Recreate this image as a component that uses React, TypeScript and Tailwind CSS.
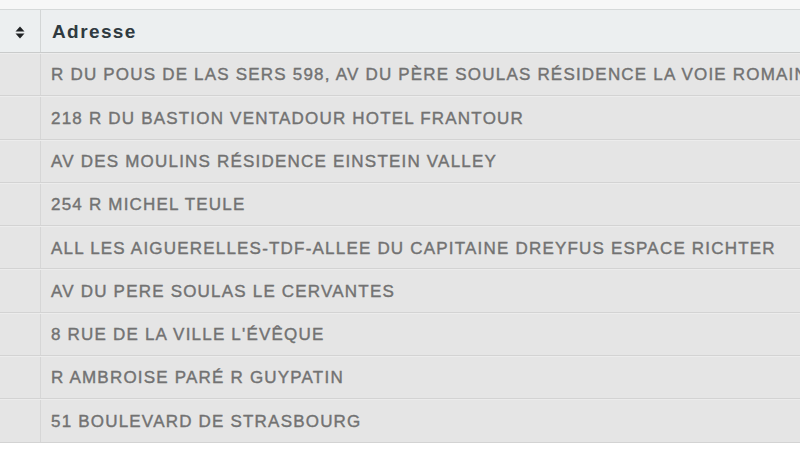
import React from "react";

const rows = [
  "R DU POUS DE LAS SERS 598, AV DU PÈRE SOULAS RÉSIDENCE LA VOIE ROMAINE",
  "218 R DU BASTION VENTADOUR HOTEL FRANTOUR",
  "AV DES MOULINS RÉSIDENCE EINSTEIN VALLEY",
  "254 R MICHEL TEULE",
  "ALL LES AIGUERELLES-TDF-ALLEE DU CAPITAINE DREYFUS ESPACE RICHTER",
  "AV DU PERE SOULAS LE CERVANTES",
  "8 RUE DE LA VILLE L'ÉVÊQUE",
  "R AMBROISE PARÉ R GUYPATIN",
  "51 BOULEVARD DE STRASBOURG",
];

export default function App() {
  return (
    <div className="w-[800px] h-[450px] overflow-hidden bg-white font-['Liberation_Sans',Arial,sans-serif]">
      <div className="h-[9px] bg-[#f7f7f7]" />
      <div className="flex h-[44px] border-t border-b border-t-[#d6d9d9] border-b-[#c9cbcb] bg-[#eceff0]">
        <div className="w-[41px] shrink-0 flex items-center justify-center pt-[2px] border-r border-[#d3d6d6]">
          <svg width="10" height="15" viewBox="0 0 10 15">
            <path d="M0.5 6.5 L5 1.5 L9.5 6.5 Z" fill="#1f2224" />
            <path d="M0.5 8.5 L5 13.5 L9.5 8.5 Z" fill="#1f2224" />
          </svg>
        </div>
        <div className="flex items-center pl-[11px] pt-[2px] text-[19px] font-bold tracking-[1.4px] text-[#2f3a40]">
          Adresse
        </div>
      </div>
      {rows.map((r, i) => (
        <div
          key={i}
          className="flex h-[43.3px] bg-[#e5e5e5] border-b border-[#d3d3d3] border-t border-t-[#ececec]"
        >
          <div className="w-[41px] shrink-0 border-r border-[#d6d6d6]" />
          <div className="flex items-center pl-[10px] pt-[1px] whitespace-nowrap text-[17px] tracking-[1.2px] text-[#727272] [-webkit-text-stroke:0.4px_#727272]">
            {r}
          </div>
        </div>
      ))}
    </div>
  );
}
